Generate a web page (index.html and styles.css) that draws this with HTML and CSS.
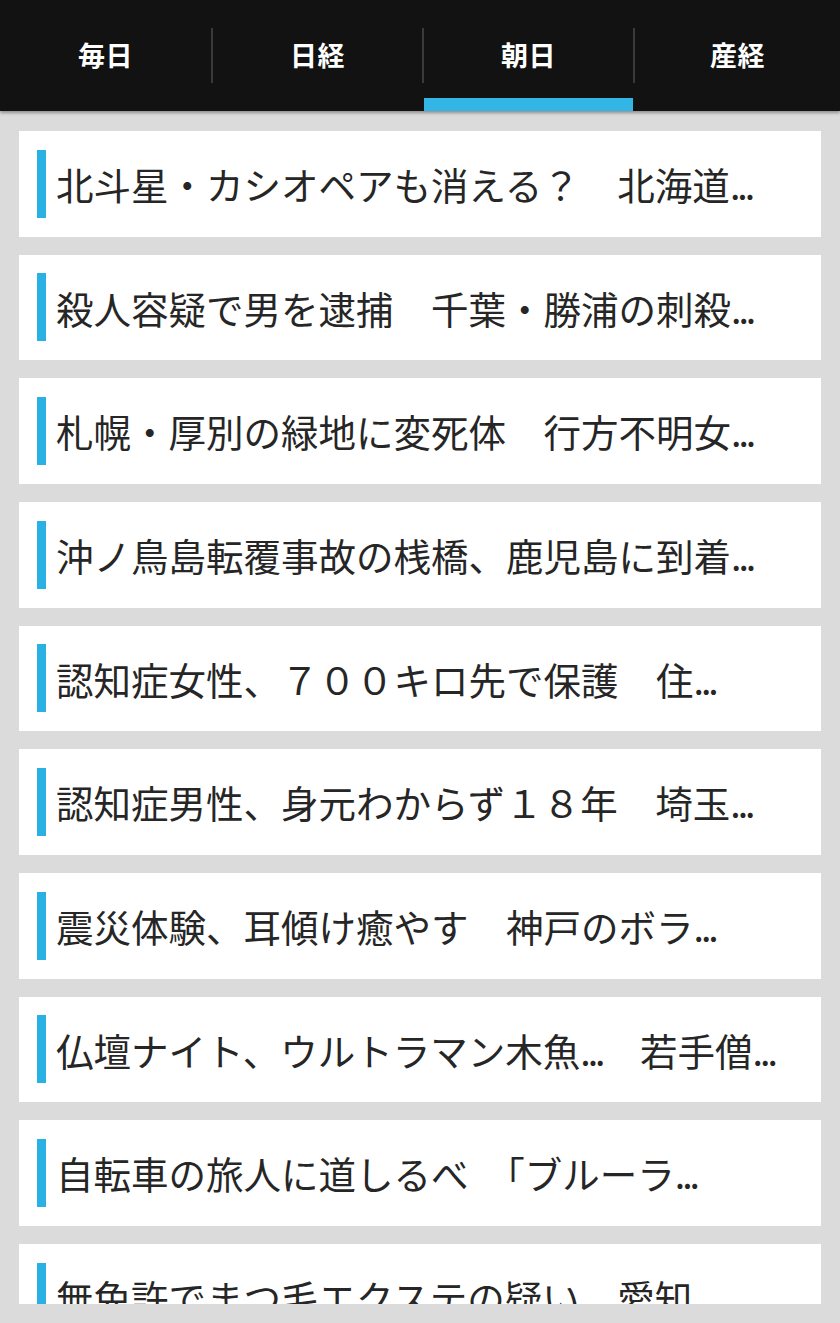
FILE: index.html
```html
<!DOCTYPE html>
<html lang="ja">
<head>
<meta charset="utf-8">
<title>ニュース</title>
<link rel="stylesheet" href="styles.css">
</head>
<body>
<header class="tabbar">
  <div class="tab"><span class="tab-label">毎日</span></div>
  <div class="divider"></div>
  <div class="tab"><span class="tab-label">日経</span></div>
  <div class="divider"></div>
  <div class="tab tab-active"><span class="tab-label">朝日</span></div>
  <div class="divider"></div>
  <div class="tab"><span class="tab-label">産経</span></div>
</header>
<main class="list">
  <div class="card"><span class="mark"></span><span class="title">北斗星・カシオペアも消える？　北海道<span class="dots">...</span></span></div>
  <div class="card"><span class="mark"></span><span class="title">殺人容疑で男を逮捕　千葉・勝浦の刺殺<span class="dots">...</span></span></div>
  <div class="card"><span class="mark"></span><span class="title">札幌・厚別の緑地に変死体　行方不明女<span class="dots">...</span></span></div>
  <div class="card"><span class="mark"></span><span class="title">沖ノ鳥島転覆事故の桟橋、鹿児島に到着<span class="dots">...</span></span></div>
  <div class="card"><span class="mark"></span><span class="title">認知症女性、７００キロ先で保護　住<span class="dots">...</span></span></div>
  <div class="card"><span class="mark"></span><span class="title">認知症男性、身元わからず１８年　埼玉<span class="dots">...</span></span></div>
  <div class="card"><span class="mark"></span><span class="title">震災体験、耳傾け癒やす　神戸のボラ<span class="dots">...</span></span></div>
  <div class="card"><span class="mark"></span><span class="title">仏壇ナイト、ウルトラマン木魚<span class="dots">...</span>　若手僧<span class="dots">...</span></span></div>
  <div class="card"><span class="mark"></span><span class="title">自転車の旅人に道しるべ　「ブルーラ<span class="dots">...</span></span></div>
  <div class="card"><span class="mark"></span><span class="title">無免許でまつ毛エクステの疑い　愛知<span class="dots">...</span></span></div>
</main>
</body>
</html>
```
FILE: styles.css
```css
html, body {
  margin: 0;
  padding: 0;
}
body {
  background: #dbdbdb;
  font-family: "Noto Sans CJK JP", "Noto Sans", sans-serif;
  width: 840px;
  height: 1323px;
  overflow: hidden;
}
.tabbar {
  display: grid;
  grid-template-columns: 211px 2px 209px 2px 209px 2px 1fr;
  height: 111px;
  background: #121212;
  box-shadow: 0 2px 3px rgba(0, 0, 0, 0.35);
  position: relative;
  z-index: 1;
}
.tab {
  display: flex;
  align-items: center;
  justify-content: center;
  box-sizing: border-box;
  padding-bottom: 2px;
}
.tab-active {
  border-bottom: 13px solid #33b5e5;
  padding-top: 13px;
  padding-bottom: 2px;
}
.tab-label {
  color: #ffffff;
  font-size: 27px;
  font-weight: 700;
  letter-spacing: 0.5px;
}
.divider {
  align-self: start;
  margin-top: 28px;
  height: 55px;
  background: #3a3a3a;
}
.list {
  margin: 20px 19px 19px;
  height: 1173px;
  overflow: hidden;
  display: flex;
  flex-direction: column;
  gap: 18px;
}
.card {
  flex: 0 0 105.67px;
  background: #ffffff;
  display: flex;
  align-items: center;
  padding-left: 18px;
}
.mark {
  flex: 0 0 9px;
  height: 68px;
  background: #29b1e3;
}
.title {
  margin-left: 10px;
  font-size: 37.5px;
  color: #262626;
  white-space: nowrap;
  line-height: 1;
}
.dots {
  letter-spacing: -3px;
}
```
